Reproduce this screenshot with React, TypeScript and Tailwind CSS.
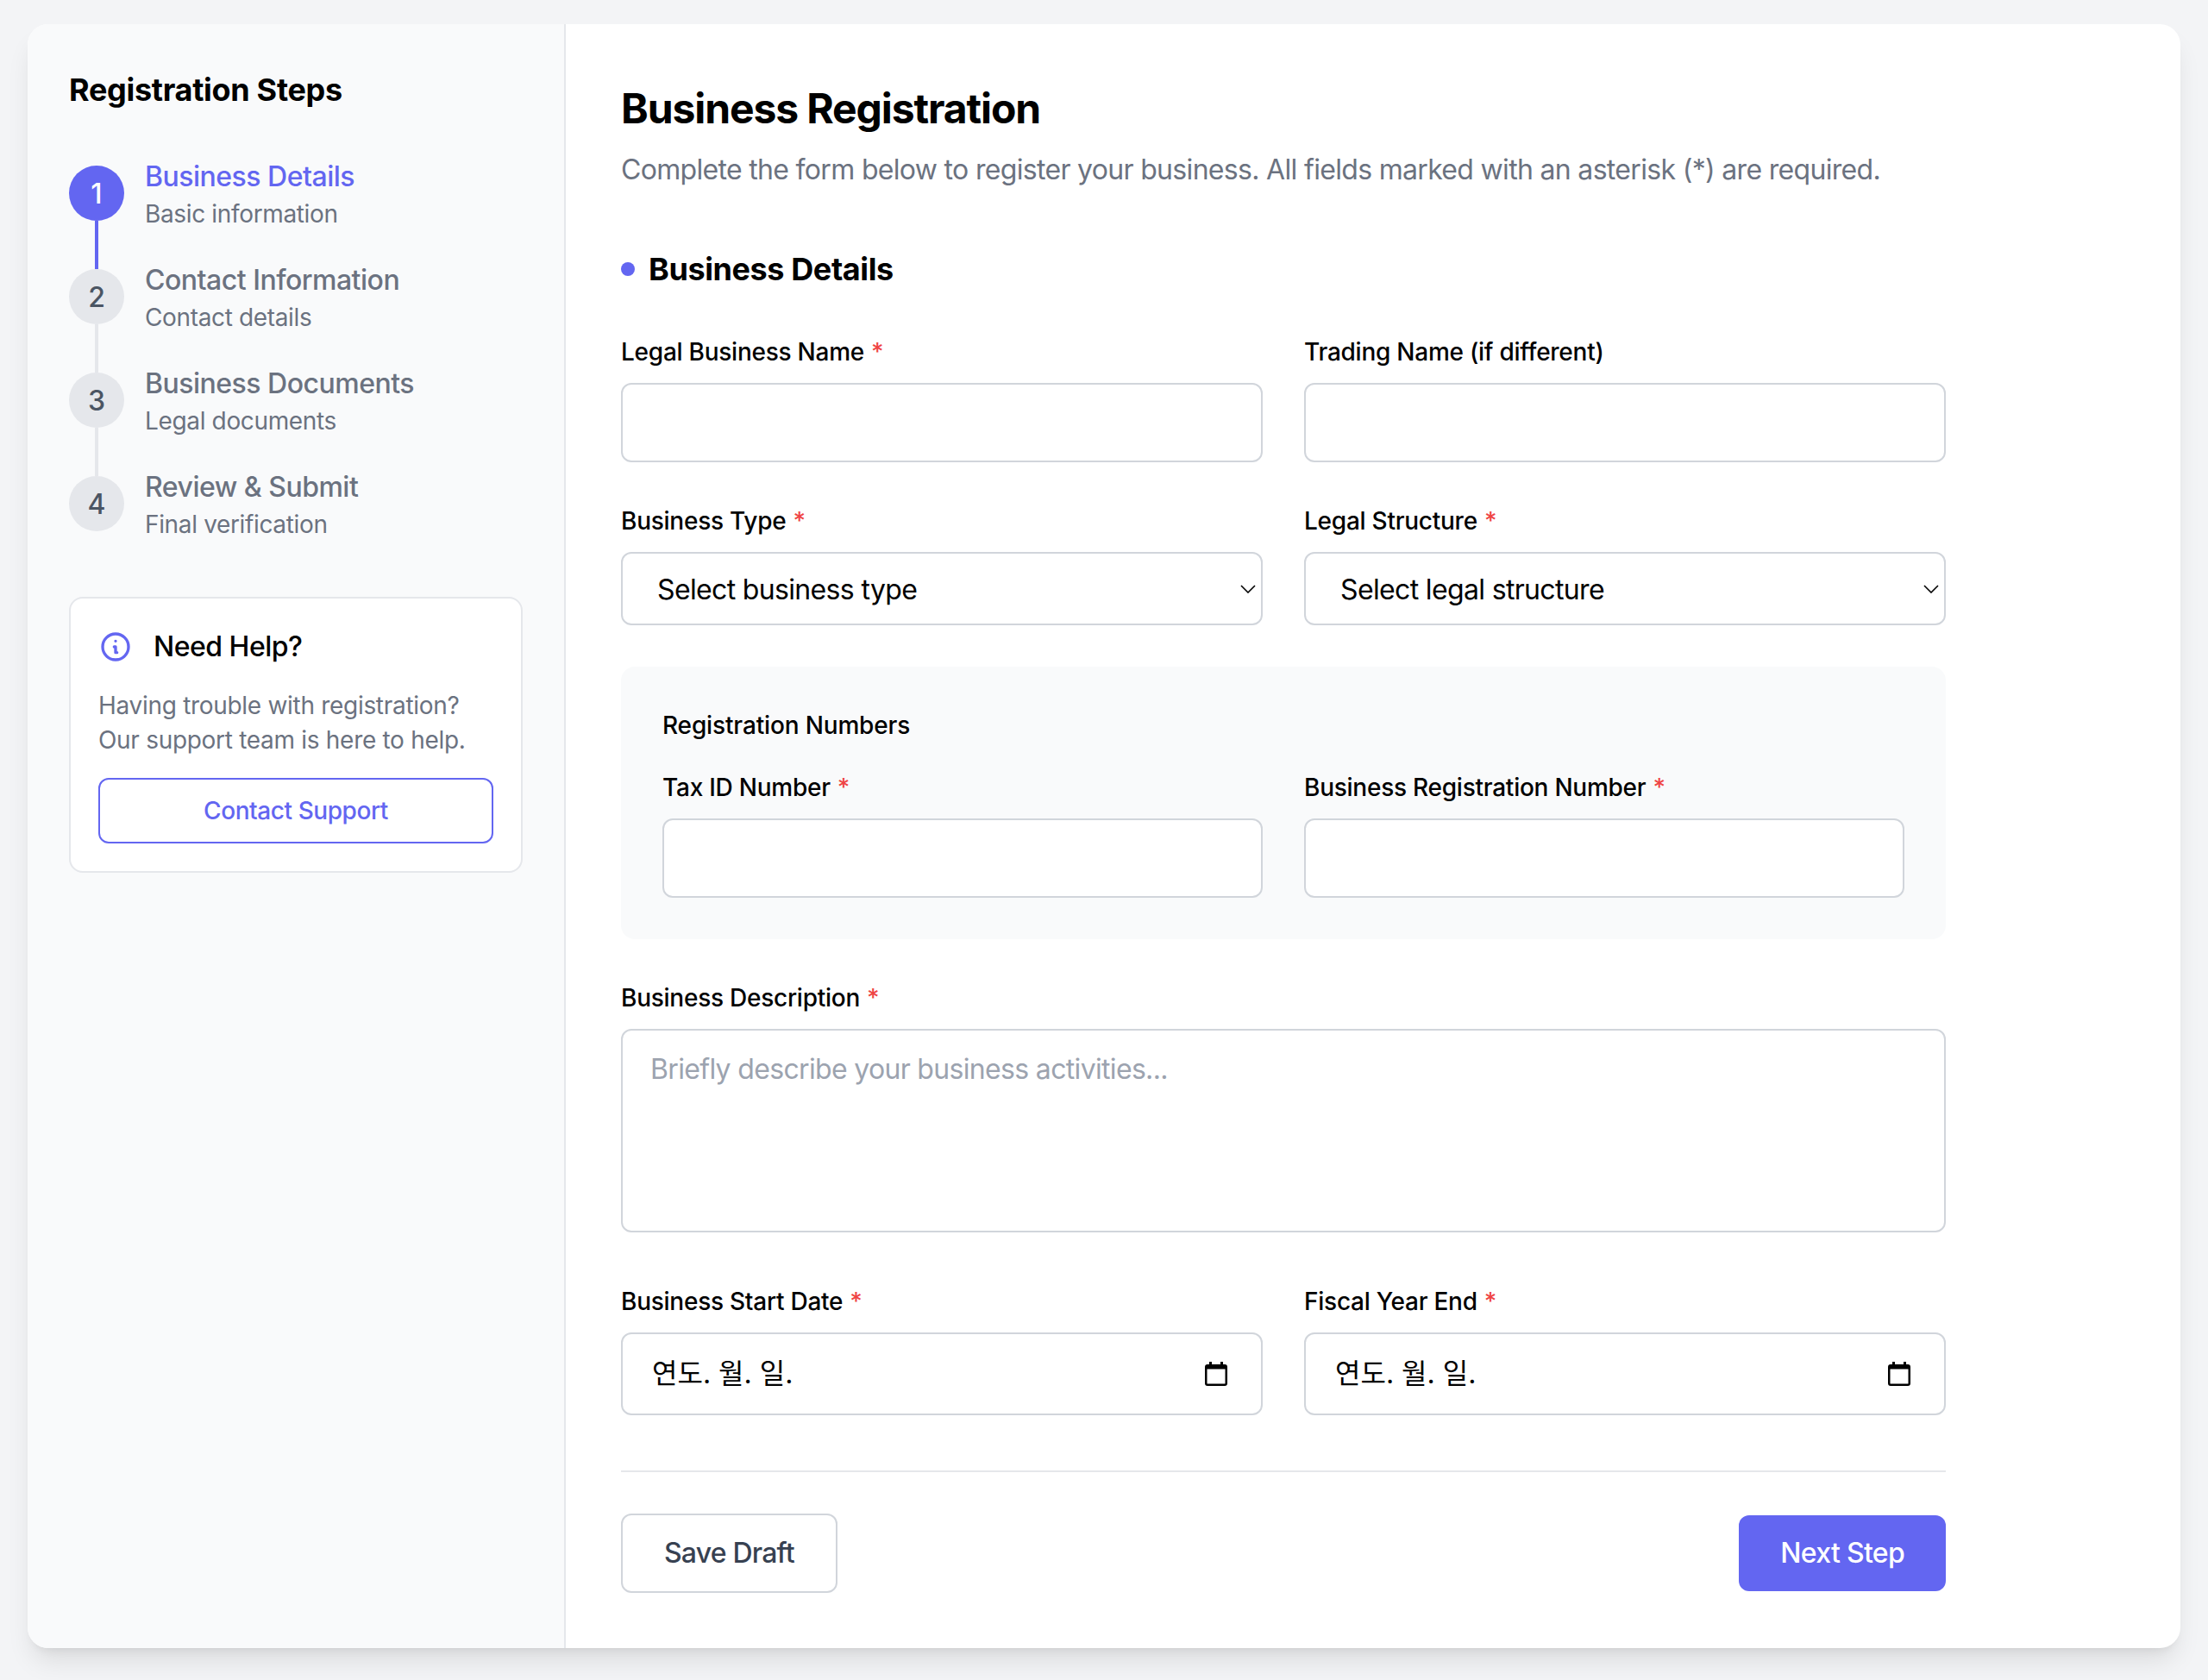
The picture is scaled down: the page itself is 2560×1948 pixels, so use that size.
const steps = [
  { n: 1, title: 'Business Details', sub: 'Basic information' },
  { n: 2, title: 'Contact Information', sub: 'Contact details' },
  { n: 3, title: 'Business Documents', sub: 'Legal documents' },
  { n: 4, title: 'Review & Submit', sub: 'Final verification' },
]

function Label({ text, required }: { text: string; required?: boolean }) {
  return (
    <label className="block text-[28px] leading-[40px] font-medium tracking-[-0.25px] text-black mb-4">
      {text}
      {required && <span className="text-[#ef4444] ml-2">*</span>}
    </label>
  )
}

function TextField({ label, required }: { label: string; required?: boolean }) {
  return (
    <div>
      <Label text={label} required={required} />
      <input
        type="text"
        className="block w-full h-[92px] px-8 border-2 border-[#d1d5db] rounded-xl bg-white text-[32px] outline-none"
      />
    </div>
  )
}

function SelectField({ label, placeholder }: { label: string; placeholder: string }) {
  return (
    <div>
      <Label text={label} required />
      <div className="relative">
        <select className="block w-full h-[85px] pt-[3px] pl-10 pr-12 border-2 border-[#d1d5db] rounded-xl bg-white text-[32px] tracking-[-0.65px] text-black appearance-none outline-none">
          <option>{placeholder}</option>
        </select>
        <svg
          className="absolute right-[8px] top-[38px] w-[18px] h-[10px] pointer-events-none"
          viewBox="0 0 18 10"
          fill="none"
          stroke="#000"
          strokeWidth="1.6"
        >
          <path d="M1 1l8 8 8-8" />
        </svg>
      </div>
    </div>
  )
}

function DateField({ label }: { label: string }) {
  return (
    <div>
      <Label text={label} required />
      <div className="flex items-center justify-between h-[96px] pl-[34px] pr-[39px] border-2 border-[#d1d5db] rounded-xl bg-white">
        <span className="text-[32px] leading-[48px] text-black">연도. 월. 일.</span>
        <svg className="w-[26px] h-[28px]" viewBox="0 0 26 28" fill="#000">
          <path d="M5 0h3v3h10V0h3v3h2a3 3 0 0 1 3 3v19a3 3 0 0 1-3 3H3a3 3 0 0 1-3-3V6a3 3 0 0 1 3-3h2V0zM2.500 8.500V25a.5.5 0 0 0 .5.500h20a.5.5 0 0 0 .5-.5V8.500h-21z" />
        </svg>
      </div>
    </div>
  )
}

export default function App() {
  return (
    <div className="min-h-screen bg-[#f3f4f6] pt-[28px] pb-[36px] px-8 [font-family:Inter,'Noto_Sans_CJK_KR',sans-serif]">
      <div className="flex bg-white rounded-3xl overflow-hidden shadow-[0_20px_30px_-6px_rgba(0,0,0,0.1),0_8px_12px_-8px_rgba(0,0,0,0.1)]">
        {/* Sidebar */}
        <aside className="w-[624px] shrink-0 bg-[#f9fafb] border-r-2 border-[#e5e7eb] p-12">
          <h2 className="text-[36px] leading-[56px] font-bold tracking-[-0.3px] text-black mb-12">Registration Steps</h2>

          <div className="flex flex-col gap-8">
            {steps.map((s, i) => (
              <div key={s.n} className="relative flex items-center gap-6">
                {i < steps.length - 1 && (
                  <div
                    className={`absolute left-[30px] top-[76px] w-1 h-[56px] ${i === 0 ? 'bg-[#6366f1]' : 'bg-[#e5e7eb]'}`}
                  />
                )}
                <div
                  className={`w-16 h-16 shrink-0 rounded-full flex items-center justify-center pt-[2px] text-[32px] font-medium ${
                    i === 0 ? 'bg-[#6366f1] text-white' : 'bg-[#e5e7eb] text-[#4b5563]'
                  }`}
                >
                  {s.n}
                </div>
                <div>
                  <div className={`pt-[2px] text-[32px] leading-[46px] font-medium tracking-[-0.5px] ${i === 0 ? 'text-[#6366f1]' : 'text-[#6b7280]'}`}>
                    {s.title}
                  </div>
                  <div className="text-[28px] leading-[40px] tracking-[-0.35px] text-[#6b7280]">{s.sub}</div>
                </div>
              </div>
            ))}
          </div>

          {/* Help card */}
          <div className="mt-16 bg-white border-2 border-[#e5e7eb] rounded-2xl p-8">
            <div className="flex items-center gap-6 mb-6">
              <svg className="w-10 h-10 shrink-0" viewBox="0 0 24 24" fill="none" stroke="#6366f1" strokeWidth="2" strokeLinecap="round" strokeLinejoin="round">
                <path d="M13 16h-1v-4h-1m1-4h.01M21 12a9 9 0 11-18 0 9 9 0 0118 0z" />
              </svg>
              <span className="text-[32px] leading-[48px] font-medium tracking-[-0.5px] text-black">Need Help?</span>
            </div>
            <p className="text-[28px] leading-[40px] tracking-[-0.3px] text-[#6b7280] mb-6">
              Having trouble with registration?
              <br />
              Our support team is here to help.
            </p>
            <button className="block w-full py-4 border-2 border-[#6366f1] rounded-xl text-[28px] leading-[40px] font-medium tracking-[-0.43px] text-[#6366f1] bg-white">
              Contact Support
            </button>
          </div>
        </aside>

        {/* Main form */}
        <main className="flex-1 p-16">
          <div className="max-w-[1536px]">
            <h1 className="pt-[3px] text-[48px] leading-[61px] font-bold tracking-[-1.1px] text-black">Business Registration</h1>
            <p className="mt-4 pt-[2px] pb-[1px] text-[32px] leading-[45px] tracking-[-0.68px] text-[#6b7280]">
              Complete the form below to register your business. All fields marked with an asterisk (*) are required.
            </p>

            <div className="mt-16 mb-12 flex items-center gap-4 h-[56px]">
              <span className="w-4 h-4 rounded-full bg-[#6366f1]" />
              <h3 className="text-[36px] leading-[56px] font-bold tracking-[-0.4px] text-black">Business Details</h3>
            </div>

            <div className="grid grid-cols-2 gap-12">
              <TextField label="Legal Business Name" required />
              <TextField label="Trading Name (if different)" />
              <SelectField label="Business Type" placeholder="Select business type" />
              <SelectField label="Legal Structure" placeholder="Select legal structure" />
            </div>

            <div className="mt-12 bg-[#f9fafb] rounded-2xl p-12">
              <div className="text-[28px] leading-[40px] font-medium tracking-[-0.15px] text-black mb-8">Registration Numbers</div>
              <div className="grid grid-cols-2 gap-12">
                <TextField label="Tax ID Number" required />
                <TextField label="Business Registration Number" required />
              </div>
            </div>

            <div className="mt-12">
              <Label text="Business Description" required />
              <textarea
                placeholder="Briefly describe your business activities..."
                className="block w-full h-[236px] px-8 pt-[21px] pb-6 border-2 border-[#d1d5db] rounded-xl bg-white text-[32px] leading-[48px] tracking-[-0.67px] placeholder:text-[#9ca3af] outline-none resize-none"
              />
            </div>

            <div className="mt-[60px] grid grid-cols-2 gap-12">
              <DateField label="Business Start Date" />
              <DateField label="Fiscal Year End" />
            </div>

            <div className="mt-16 pt-12 border-t-2 border-[#e5e7eb] flex items-center justify-between">
              <button className="h-[92px] px-[48px] border-2 border-[#d1d5db] rounded-xl bg-white text-[32px] leading-[48px] font-medium tracking-[-0.8px] text-[#374151]">
                Save Draft
              </button>
              <button className="h-[88px] px-[48px] rounded-xl bg-[#6366f1] text-[32px] leading-[48px] font-medium tracking-[-0.7px] text-white">
                Next Step
              </button>
            </div>
          </div>
        </main>
      </div>
    </div>
  )
}
